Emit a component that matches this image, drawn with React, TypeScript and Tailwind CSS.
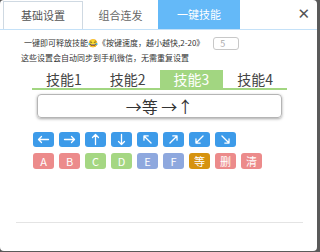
import React from "react";

const cjk = { fontFamily: '"Noto Sans CJK SC", "Noto Sans", sans-serif' };

function ArrowBtn({ rot }: { rot: number }) {
  return (
    <div className="w-[21px] h-[15px] rounded-[3px] bg-[#3d9be9] flex items-center justify-center">
      <svg width="13" height="11" viewBox="0 0 13 11" style={{ transform: `rotate(${rot}deg)` }}>
        <path d="M1.5 5.5 H11.5 M1.5 5.5 L4.5 2.5 M1.5 5.5 L4.5 8.5" stroke="white" strokeWidth="1.3" fill="none" strokeLinecap="round" />
      </svg>
    </div>
  );
}

function KeyBtn({ label, color }: { label: string; color: string }) {
  return (
    <div
      className={`w-[21px] h-[16px] rounded-[3px] ${color} flex items-center justify-center text-white text-[11px] leading-none`}
      style={cjk}
    >
      {label}
    </div>
  );
}

export default function App() {
  const rots = [0, 180, 90, 270, 45, 135, 315, 225];
  return (
    <div className="w-[320px] h-[252px] bg-[#5a5a5a]">
      <div className="w-[317px] h-[251px] bg-white rounded-[4px] flex flex-col overflow-hidden" style={cjk}>
        {/* header */}
        <div className="h-[30px] flex items-end border-b border-[#c4e1f8] shrink-0">
          <div className="ml-[3px] w-[80px] h-[28px] border border-b-0 border-[#cfd9e2] flex items-center justify-center text-[11px] text-[#555]">
            基础设置
          </div>
          <div className="w-[75px] h-[28px] flex items-center justify-center text-[11px] text-[#666]">
            组合连发
          </div>
          <div className="w-[82px] h-[30px] bg-[#64b9f8] flex items-center justify-center text-[11px] text-white">
            一键技能
          </div>
          <div className="ml-auto mr-[7px] self-center text-[15px] font-bold text-[#555] leading-none" style={{ fontFamily: '"DejaVu Sans", sans-serif' }}>
            ✕
          </div>
        </div>

        {/* info row */}
        <div className="mt-[6px] ml-[24px] flex items-center h-[14px]">
          <span className="text-[8px] text-[#333] leading-none">一键即可释放技能😂《按键速度，越小越快,2-20》</span>
          <div className="ml-[9px] w-[26px] h-[13px] border border-[#c8c8c8] rounded-[3px] flex items-center pl-[6px] text-[9px] text-[#aaa] leading-none">
            5
          </div>
        </div>
        <div className="mt-[2px] ml-[21px] text-[8px] text-[#333] leading-[12px]">
          这些设置会自动同步到手机微信，无需重复设置
        </div>

        {/* skill tabs */}
        <div className="mt-[6px] ml-[32px] w-[255px] flex border-b-2 border-[#a2d681]">
          {["技能1", "技能2", "技能3", "技能4"].map((t, i) => (
            <div
              key={t}
              className={`w-[64px] h-[18px] flex items-center justify-center text-[14px] leading-none ${i === 2 ? "bg-[#a2d681] text-white" : "text-[#444]"}`}
            >
              {t}
            </div>
          ))}
        </div>

        {/* display */}
        <div className="mt-[4px] ml-[37px] w-[245px] h-[24px] border border-[#b5b5b5] rounded-[4px] shadow-[0_1px_3px_rgba(0,0,0,0.35)] flex items-center justify-center text-[16px] text-[#333] leading-none">
          →等 →↑
        </div>

        {/* buttons */}
        <div className="mt-[14px] ml-[33px] flex gap-[5px]">
          {rots.map((r, i) => (
            <ArrowBtn key={i} rot={r} />
          ))}
        </div>
        <div className="mt-[6px] ml-[33px] flex gap-[5px]">
          <KeyBtn label="A" color="bg-[#ec8b8b]" />
          <KeyBtn label="B" color="bg-[#ec8b8b]" />
          <KeyBtn label="C" color="bg-[#a5d783]" />
          <KeyBtn label="D" color="bg-[#a5d783]" />
          <KeyBtn label="E" color="bg-[#8ea8de]" />
          <KeyBtn label="F" color="bg-[#8ea8de]" />
          <KeyBtn label="等" color="bg-[#d6930f]" />
          <KeyBtn label="删" color="bg-[#ec8b8b]" />
          <KeyBtn label="清" color="bg-[#ec8b8b]" />
        </div>

        {/* bottom rule */}
        <div className="mt-[53px] ml-[16px] w-[287px] h-px bg-[#e4e4e4]" />
      </div>
    </div>
  );
}
